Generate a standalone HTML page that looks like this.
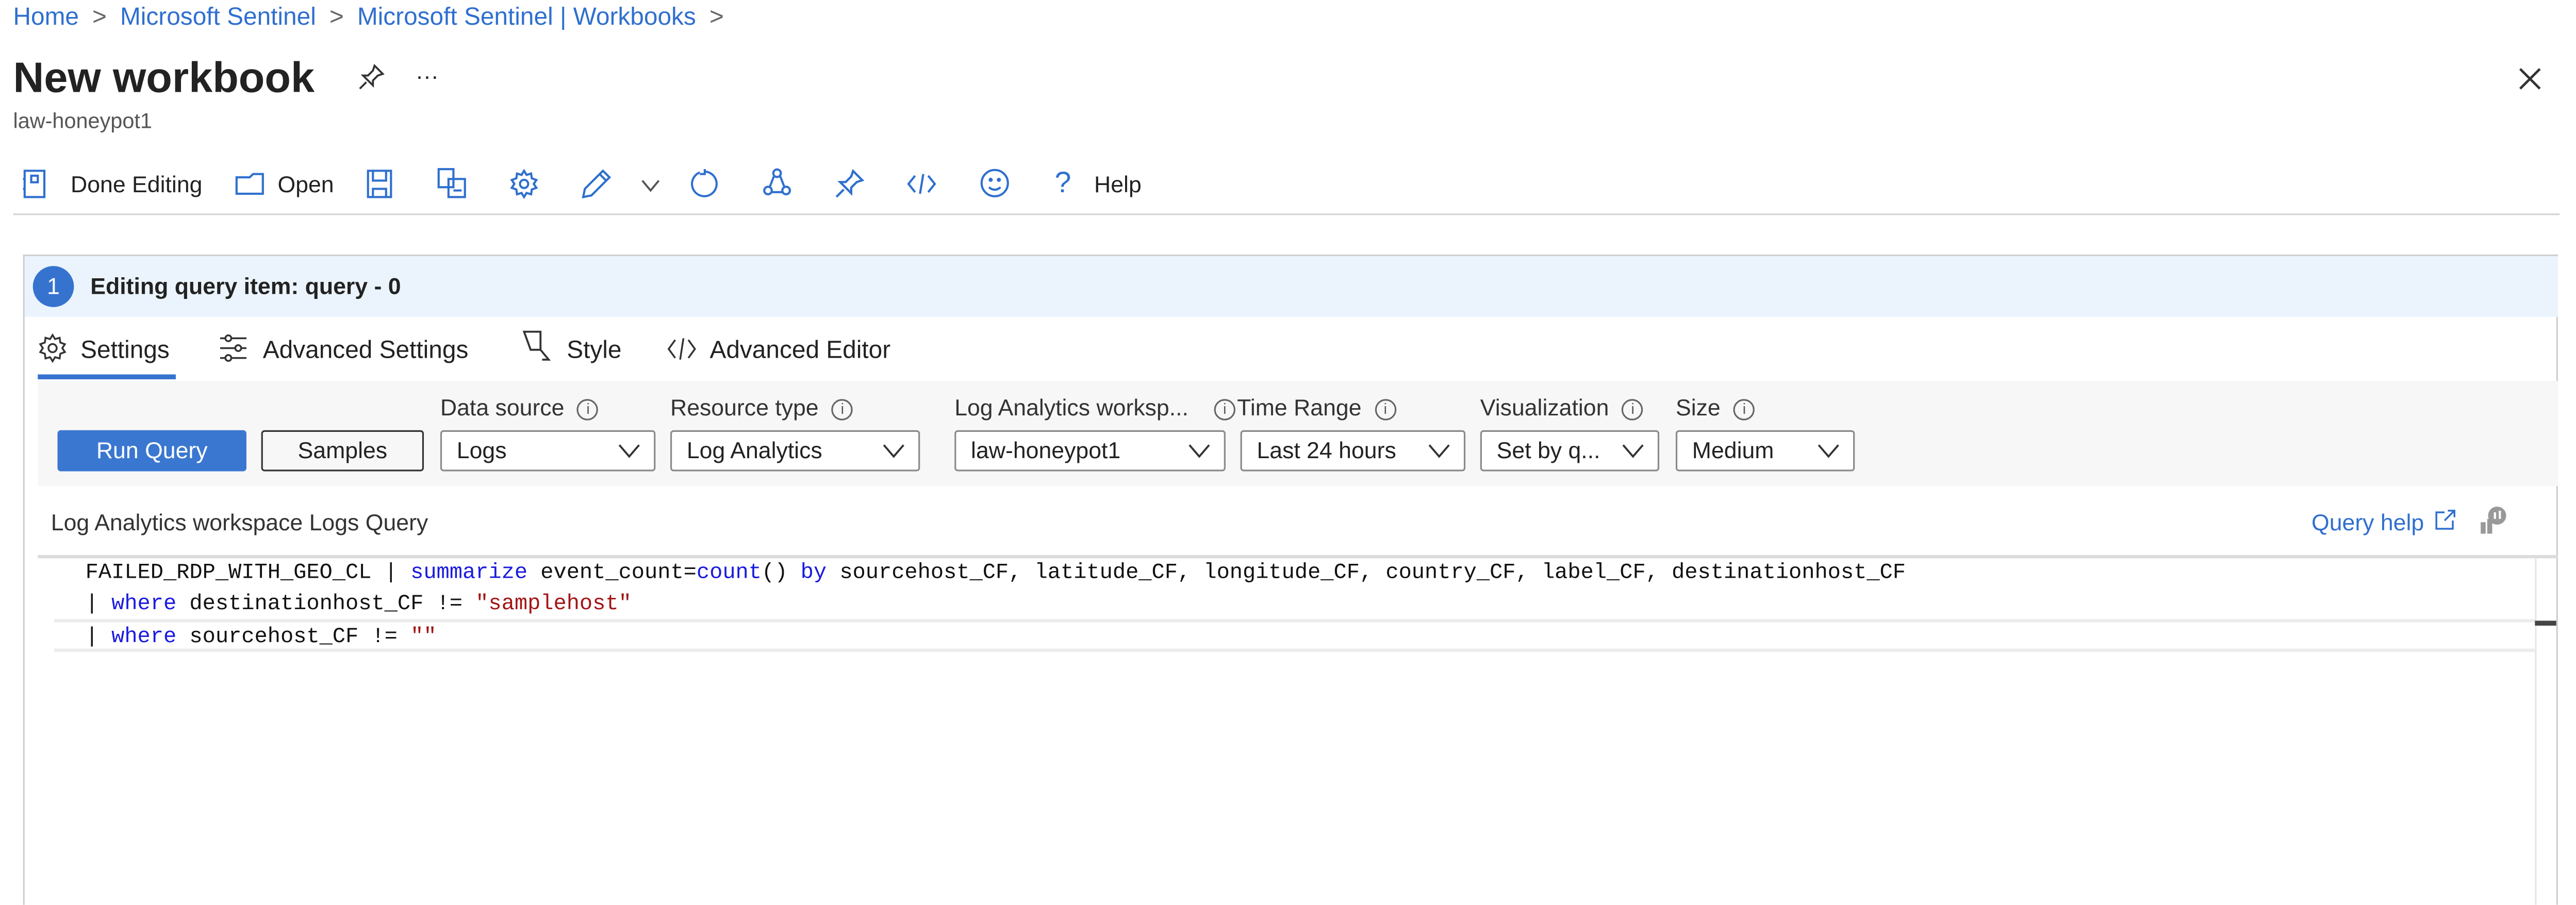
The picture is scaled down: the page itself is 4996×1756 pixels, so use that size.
<!DOCTYPE html>
<html><head><meta charset="utf-8">
<style>
html,body{margin:0;padding:0;background:#fff;width:4996px;height:1756px;overflow:hidden}
#w{position:absolute;left:0;top:0;width:1568px;height:551px;overflow:hidden;transform:scale(3.18622);transform-origin:0 0;font-family:"Liberation Sans",sans-serif;color:#222}
.a{position:absolute;white-space:nowrap}
.bl{color:#2f6fcf}
.ic{position:absolute}
.sel{position:absolute;top:262px;height:25px;border:1px solid #8a8a8a;border-radius:2px;background:#fff;box-sizing:border-box;font-size:14px;line-height:23px;padding-left:9px}
.sel svg{position:absolute;right:8px;top:7px}
.lbl{position:absolute;top:240px;font-size:14px;color:#333}
.inf{display:inline-block;width:11px;height:11px;border:1px solid #666;border-radius:50%;font-size:9px;line-height:11px;text-align:center;color:#555;vertical-align:1px;margin-left:8px}
.code{position:absolute;font-family:"Liberation Mono",monospace;font-size:13.2px;white-space:pre;color:#111}
.k{color:#1a1adf}.s{color:#a31515}
</style></head><body><div id="w">
<div class="a bl" style="left:8px;top:2px;font-size:15px">Home <span style="color:#666;margin:0 4px">&gt;</span> Microsoft Sentinel <span style="color:#666;margin:0 4px">&gt;</span> Microsoft Sentinel | Workbooks <span style="color:#666;margin:0 4px">&gt;</span></div>
<div class="a" style="left:8px;top:32px;font-size:26px;font-weight:600;color:#222">New workbook</div>
<svg class="ic" style="left:218px;top:39px" width="16" height="16" viewBox="0 0 16 16" fill="none" stroke="#333" stroke-width="1.2"><path d="M10 1l5 5-3 1-3 3 0 3-6-6 3 0 3-3z M5 11l-4 4"/></svg>
<div class="a" style="left:253px;top:38px;font-size:14px">···</div>
<div class="a" style="left:8px;top:66px;font-size:13px;color:#555">law-honeypot1</div>
<svg class="ic" style="left:1533px;top:41px" width="14" height="14" viewBox="0 0 14 14" stroke="#333" stroke-width="1.5"><path d="M1 1l12 12M13 1L1 13"/></svg>

<svg class="ic" style="left:12px;top:103px" width="18" height="18" viewBox="0 0 18 18" fill="none" stroke="#2f6fcf" stroke-width="1.3"><rect x="3" y="1" width="12" height="16"/><rect x="7" y="4" width="4" height="4"/><path d="M3 6h-1M3 12h-1"/></svg>
<div class="a" style="left:43px;top:104px;font-size:14px">Done Editing</div>
<svg class="ic" style="left:143px;top:104px" width="18" height="16" viewBox="0 0 18 16" fill="none" stroke="#2f6fcf" stroke-width="1.3"><path d="M1 4h8l2-2h6v12H1z"/></svg>
<div class="a" style="left:169px;top:104px;font-size:14px">Open</div>
<svg class="ic" style="left:222px;top:103px" width="18" height="18" viewBox="0 0 18 18" fill="none" stroke="#2f6fcf" stroke-width="1.3"><rect x="2" y="1" width="14" height="16"/><path d="M5 1v6h8V1M5 17v-5h8v5"/></svg>
<svg class="ic" style="left:266px;top:102px" width="18" height="19" viewBox="0 0 18 19" fill="none" stroke="#2f6fcf" stroke-width="1.3"><rect x="1" y="1" width="9" height="11"/><rect x="7" y="7" width="10" height="11"/><path d="M10 14h5"/></svg>
<svg class="ic" style="left:310px;top:103px" width="18" height="18" viewBox="0 0 18 18" fill="none" stroke="#2f6fcf" stroke-width="1.3"><circle cx="9" cy="9" r="2.5"/><path d="M9 1l1.5 2.5 2.8-.8.4 2.9 2.8 1-1.6 2.4 1.6 2.4-2.8 1-.4 2.9-2.8-.8L9 17l-1.5-2.5-2.8.8-.4-2.9-2.8-1L3.1 9 1.5 6.6l2.8-1 .4-2.9 2.8.8z"/></svg>
<svg class="ic" style="left:354px;top:103px" width="18" height="18" viewBox="0 0 18 18" fill="none" stroke="#2f6fcf" stroke-width="1.3"><path d="M13 1l4 4L6 16l-5 1 1-5z M11 3l4 4"/></svg>
<svg class="ic" style="left:390px;top:109px" width="12" height="8" viewBox="0 0 12 8" fill="none" stroke="#555" stroke-width="1.2"><path d="M1 1l5 6 5-6"/></svg>
<svg class="ic" style="left:420px;top:102px" width="18" height="19" viewBox="0 0 18 19" fill="none" stroke="#2f6fcf" stroke-width="1.3"><path d="M6 3a7.5 7.5 0 1 0 3-.5M9 1v3H6"/></svg>
<svg class="ic" style="left:464px;top:102px" width="18" height="19" viewBox="0 0 18 19" fill="none" stroke="#2f6fcf" stroke-width="1.3"><circle cx="9" cy="3.5" r="2.3"/><circle cx="3.5" cy="14" r="2.3"/><circle cx="14.5" cy="14" r="2.3"/><path d="M7 5.5L4.5 12M11 5.5l2.5 6.5M6 15h6"/></svg>
<svg class="ic" style="left:508px;top:103px" width="18" height="18" viewBox="0 0 16 16" fill="none" stroke="#2f6fcf" stroke-width="1.2"><path d="M10 1l5 5-3 1-3 3 0 3-6-6 3 0 3-3z M5 11l-4 4"/></svg>
<svg class="ic" style="left:552px;top:104px" width="18" height="16" viewBox="0 0 18 16" fill="none" stroke="#2f6fcf" stroke-width="1.3"><path d="M5 3L1 8l4 5M13 3l4 5-4 5M10 2L8 14"/></svg>
<svg class="ic" style="left:596px;top:102px" width="19" height="19" viewBox="0 0 19 19" fill="none" stroke="#2f6fcf" stroke-width="1.3"><circle cx="9.5" cy="9.5" r="8"/><path d="M6 12c2 2 5 2 7 0"/><circle cx="7" cy="7.5" r=".6" fill="#2f6fcf"/><circle cx="12" cy="7.5" r=".6" fill="#2f6fcf"/></svg>
<div class="a bl" style="left:642px;top:101px;font-size:18px">?</div>
<div class="a" style="left:666px;top:104px;font-size:14px">Help</div>
<div class="a" style="left:8px;top:130px;width:1550px;height:1px;background:#d4d4d4"></div>

<div class="a" style="left:14px;top:155px;width:1543px;height:420px;border:1px solid #cfcfcf;border-bottom:none;box-sizing:border-box"></div>
<div class="a" style="left:15px;top:156px;width:1542px;height:37px;background:#ebf4fd"></div>
<div class="a" style="left:20px;top:162px;width:25px;height:25px;border-radius:50%;background:#3673cf;color:#fff;font-size:14px;text-align:center;line-height:25px">1</div>
<div class="a" style="left:55px;top:166px;font-size:14px;font-weight:bold;color:#222">Editing query item: query - 0</div>

<svg class="ic" style="left:23px;top:203px" width="18" height="18" viewBox="0 0 18 18" fill="none" stroke="#333" stroke-width="1.1"><circle cx="9" cy="9" r="2.5"/><path d="M9 1l1.5 2.5 2.8-.8.4 2.9 2.8 1-1.6 2.4 1.6 2.4-2.8 1-.4 2.9-2.8-.8L9 17l-1.5-2.5-2.8.8-.4-2.9-2.8-1L3.1 9 1.5 6.6l2.8-1 .4-2.9 2.8.8z"/></svg>
<div class="a" style="left:49px;top:205px;font-size:15px">Settings</div>
<div class="a" style="left:23px;top:228px;width:84px;height:3px;background:#3673cf"></div>
<svg class="ic" style="left:133px;top:203px" width="18" height="18" viewBox="0 0 18 18" fill="none" stroke="#333" stroke-width="1.1"><path d="M1 3h16M1 9h16M1 15h16"/><circle cx="6" cy="3" r="1.8" fill="#fff"/><circle cx="12" cy="9" r="1.8" fill="#fff"/><circle cx="6" cy="15" r="1.8" fill="#fff"/></svg>
<div class="a" style="left:160px;top:205px;font-size:15px">Advanced Settings</div>
<svg class="ic" style="left:318px;top:201px" width="18" height="20" viewBox="0 0 18 20" fill="none" stroke="#333" stroke-width="1.2"><path d="M1 1h10v11H5z M11 12l5 6h-4"/></svg>
<div class="a" style="left:345px;top:205px;font-size:15px">Style</div>
<svg class="ic" style="left:406px;top:205px" width="18" height="15" viewBox="0 0 18 15" fill="none" stroke="#333" stroke-width="1.1"><path d="M5 2L1 7.5 5 13M13 2l4 5.5-4 5.5M10 1L8 14"/></svg>
<div class="a" style="left:432px;top:205px;font-size:15px">Advanced Editor</div>

<div class="a" style="left:23px;top:232px;width:1534px;height:64px;background:#f7f7f7"></div>
<div class="lbl" style="left:268px">Data source<span class="inf">i</span></div>
<div class="lbl" style="left:408px">Resource type<span class="inf">i</span></div>
<div class="lbl" style="left:581px">Log Analytics worksp...</div>
<div class="lbl" style="left:739px"><span class="inf" style="margin-left:0;margin-right:1px">i</span>Time Range<span class="inf">i</span></div>
<div class="lbl" style="left:901px">Visualization<span class="inf">i</span></div>
<div class="lbl" style="left:1020px">Size<span class="inf">i</span></div>

<div class="a" style="left:35px;top:262px;width:115px;height:25px;background:#3a77d0;border-radius:2px;color:#fff;font-size:14px;text-align:center;line-height:25px">Run Query</div>
<div class="a" style="left:159px;top:262px;width:99px;height:25px;border:1.5px solid #333;border-radius:2px;box-sizing:border-box;font-size:14px;text-align:center;line-height:22px">Samples</div>
<div class="sel" style="left:268px;width:131px">Logs<svg width="14" height="9" viewBox="0 0 14 9" fill="none" stroke="#333" stroke-width="1.2"><path d="M1 1l6 7 6-7"/></svg></div>
<div class="sel" style="left:408px;width:152px">Log Analytics<svg width="14" height="9" viewBox="0 0 14 9" fill="none" stroke="#333" stroke-width="1.2"><path d="M1 1l6 7 6-7"/></svg></div>
<div class="sel" style="left:581px;width:165px">law-honeypot1<svg width="14" height="9" viewBox="0 0 14 9" fill="none" stroke="#333" stroke-width="1.2"><path d="M1 1l6 7 6-7"/></svg></div>
<div class="sel" style="left:755px;width:137px">Last 24 hours<svg width="14" height="9" viewBox="0 0 14 9" fill="none" stroke="#333" stroke-width="1.2"><path d="M1 1l6 7 6-7"/></svg></div>
<div class="sel" style="left:901px;width:109px">Set by q...<svg width="14" height="9" viewBox="0 0 14 9" fill="none" stroke="#333" stroke-width="1.2"><path d="M1 1l6 7 6-7"/></svg></div>
<div class="sel" style="left:1020px;width:109px">Medium<svg width="14" height="9" viewBox="0 0 14 9" fill="none" stroke="#333" stroke-width="1.2"><path d="M1 1l6 7 6-7"/></svg></div>

<div class="a" style="left:31px;top:310px;font-size:14px;color:#333">Log Analytics workspace Logs Query</div>
<div class="a bl" style="left:1407px;top:310px;font-size:14px">Query help</div>
<svg class="ic" style="left:1482px;top:310px" width="13" height="13" viewBox="0 0 13 13" fill="none" stroke="#2f6fcf" stroke-width="1.1"><path d="M6 2H1v10h10V7M8 1h4v4M12 1L6 7"/></svg>
<svg class="ic" style="left:1509px;top:308px" width="18" height="18" viewBox="0 0 18 18"><circle cx="11" cy="6" r="5.5" fill="#999"/><rect x="1" y="10" width="3" height="7" fill="#999"/><rect x="5" y="8" width="3" height="9" fill="#999"/><rect x="9" y="4" width="1.3" height="4" fill="#fff"/><rect x="12" y="3" width="1.3" height="5" fill="#fff"/></svg>

<div class="a" style="left:23px;top:338px;width:1534px;height:2px;background:#dcdcdc"></div>
<div class="a" style="left:1543px;top:340px;width:1px;height:211px;background:#e6e6e6"></div>
<div class="a" style="left:33px;top:377px;width:1510px;height:20px;background:#fff;border-top:2px solid #ececec;border-bottom:2px solid #ececec;box-sizing:border-box"></div>
<div class="a" style="left:1543px;top:378px;width:13px;height:3px;background:#444"></div>
<div class="code" style="left:52px;top:341px">FAILED_RDP_WITH_GEO_CL | <span class="k">summarize</span> event_count=<span class="k">count</span>() <span class="k">by</span> sourcehost_CF, latitude_CF, longitude_CF, country_CF, label_CF, destinationhost_CF</div>
<div class="code" style="left:52px;top:360px">| <span class="k">where</span> destinationhost_CF != <span class="s">"samplehost"</span></div>
<div class="code" style="left:52px;top:380px">| <span class="k">where</span> sourcehost_CF != <span class="s">""</span></div>
</div></body></html>
